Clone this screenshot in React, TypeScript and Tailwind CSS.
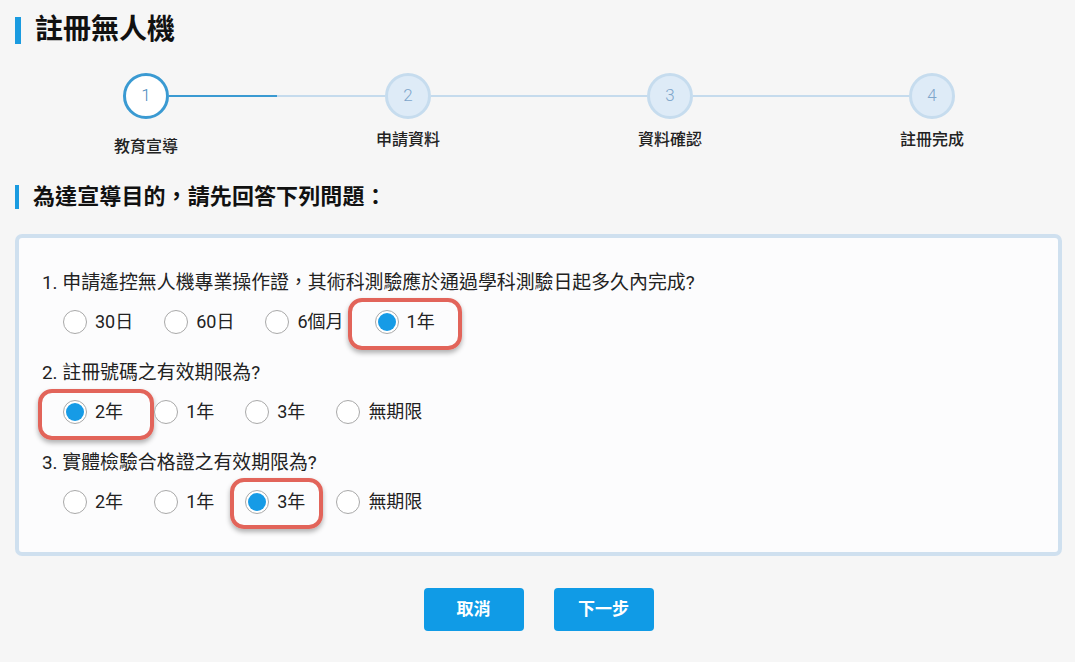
import React from 'react';

const font = { fontFamily: "Roboto, 'Noto Sans CJK TC', sans-serif" };

const steps = ['教育宣導', '申請資料', '資料確認', '註冊完成'];

const questions = [
  {
    text: '1. 申請遙控無人機專業操作證，其術科測驗應於通過學科測驗日起多久內完成?',
    options: ['30日', '60日', '6個月', '1年'],
    selected: 3,
    box: 'left-[-27px] right-[-27px] top-[-12px] bottom-[-16px]',
  },
  {
    text: '2. 註冊號碼之有效期限為?',
    options: ['2年', '1年', '3年', '無期限'],
    selected: 0,
    box: 'left-[-25px] right-[-31px] top-[-11px] bottom-[-16px]',
  },
  {
    text: '3. 實體檢驗合格證之有效期限為?',
    options: ['2年', '1年', '3年', '無期限'],
    selected: 2,
    box: 'left-[-15px] right-[-18px] top-[-12px] bottom-[-15px]',
  },
];

const Radio = ({ checked }: { checked: boolean }) => (
  <span className="w-[24px] h-[24px] rounded-full border border-[#a9a9a9] bg-white p-[2px] flex shrink-0">
    {checked && <span className="flex-1 rounded-full bg-[#169be6]" />}
  </span>
);

export default function App() {
  return (
    <div className="min-h-[662px] bg-[#f6f6f6] text-[#1c1c1c] pl-[15px] pr-[13px] pt-[13px] pb-[30px]" style={font}>
      <div className="flex items-center h-[34px]">
        <span className="w-[6px] h-[27px] bg-[#1a9be0]" />
        <h1 className="ml-[14px] text-[28px] font-bold leading-[34px] text-[#111]">註冊無人機</h1>
      </div>

      <div className="grid grid-cols-4 w-[1048px] mt-[26px]">
        {steps.map((s, i) => {
          const active = i === 0;
          return (
            <div key={s} className="flex flex-col items-center">
              <div className="flex items-center w-full">
                <div className={`flex-1 h-[2px] ${i === 0 ? '' : 'bg-[#c5dbed]'}`} />
                <div
                  className={`w-[46px] h-[46px] rounded-full border-[3px] flex items-center justify-center text-[17px] font-light ${
                    active ? 'bg-white border-[#3a9ad2] text-[#4a8cbd]' : 'bg-[#deebf7] border-[#c6dcee] text-[#7ea6cb]'
                  }`}
                >
                  {i + 1}
                </div>
                <div className={`flex-1 h-[2px] ${i === 3 ? '' : active ? 'bg-[#3a9ad2]' : 'bg-[#c5dbed]'}`} />
              </div>
              <div className={`text-[16px] font-medium leading-[22px] text-[#222] ${active ? 'mt-[17px]' : 'mt-[10px]'}`}>
                {s}
              </div>
            </div>
          );
        })}
      </div>

      <div className="flex items-center h-[30px] mt-[24px]">
        <span className="w-[4px] h-[24px] bg-[#1a9be0]" />
        <h2 className="ml-[14px] text-[22px] font-bold leading-[30px] text-[#111] tracking-[0.1px]">為達宣導目的，請先回答下列問題：</h2>
      </div>

      <div className="mt-[22px] border-[4px] border-[#cfe0ef] rounded-[7px] bg-[#fcfcfd] pl-[23px] pt-[32px] pb-[32px]">
        {questions.map((q, qi) => (
          <div key={qi} className={qi > 0 ? 'mt-[20px]' : ''}>
            <div className="text-[18.9px] leading-[26px] text-[#222]">{q.text}</div>
            <div className="flex items-center h-[36px] mt-[8px] pl-[21px] gap-[31px]">
              {q.options.map((o, oi) => {
                const checked = oi === q.selected;
                return (
                  <div key={o} className="relative flex items-center gap-[8px]">
                    <Radio checked={checked} />
                    <span className="text-[18px] leading-[24px] text-[#222]">{o}</span>
                    {checked && (
                      <span
                        className={`absolute ${q.box} border-[4px] border-[#e2645a] rounded-[14px] shadow-[0_3px_5px_rgba(0,0,0,0.3)] pointer-events-none`}
                      />
                    )}
                  </div>
                );
              })}
            </div>
          </div>
        ))}
      </div>

      <div className="flex justify-center gap-[30px] mt-[32px]">
        <button className="w-[100px] h-[43px] rounded-[4px] bg-[#109be6] text-white text-[17px] font-bold">取消</button>
        <button className="w-[100px] h-[43px] rounded-[4px] bg-[#109be6] text-white text-[17px] font-bold">下一步</button>
      </div>
    </div>
  );
}
